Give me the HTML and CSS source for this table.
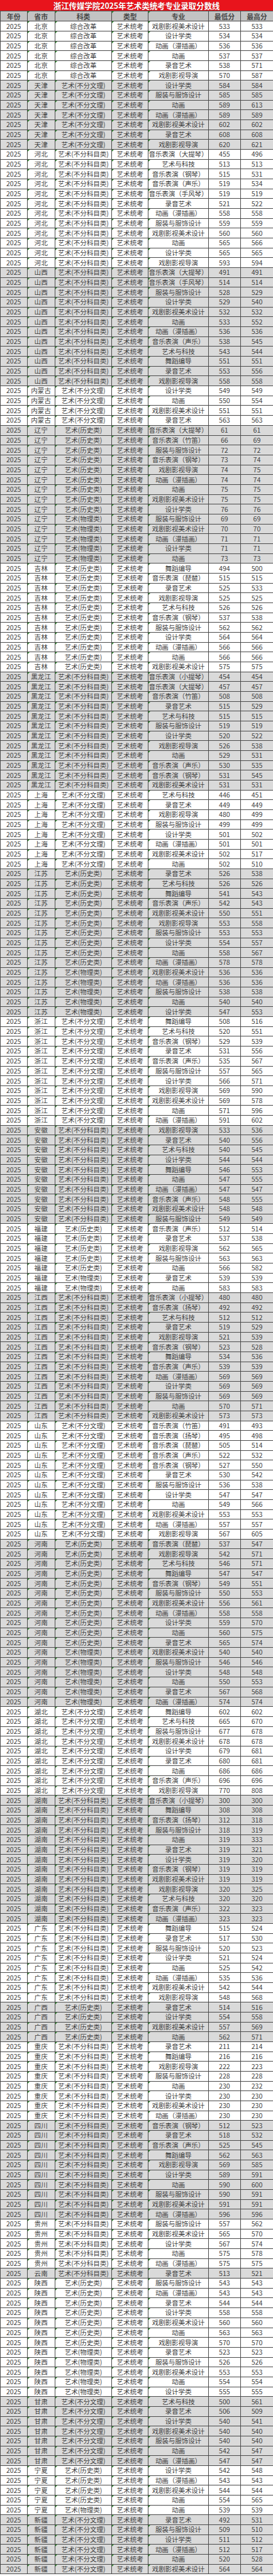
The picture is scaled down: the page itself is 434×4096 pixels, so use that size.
FILE: index.html
```html
<!DOCTYPE html>
<html lang="zh">
<head>
<meta charset="utf-8">
<title>浙江传媒学院2025年艺术类统考专业录取分数线</title>
<link rel="stylesheet" href="styles.css">
</head>
<body>
<div class="sheet">
<div class="title">浙江传媒学院2025年艺术类统考专业录取分数线</div>
<table class="grid">
<colgroup><col class="c1"><col class="c2"><col class="c3"><col class="c4"><col class="c5"><col class="c6"><col class="c7"></colgroup>
<thead><tr class="head"><th>年份</th><th>省市</th><th>科类</th><th>类型</th><th>专业</th><th>最低分</th><th>最高分</th></tr></thead>
<tbody>
<tr><td>2025</td><td>北京</td><td>综合改革</td><td>艺术统考</td><td>戏剧影视美术设计</td><td>533</td><td>533</td></tr>
<tr><td>2025</td><td>北京</td><td>综合改革</td><td>艺术统考</td><td>设计学类</td><td>534</td><td>534</td></tr>
<tr><td>2025</td><td>北京</td><td>综合改革</td><td>艺术统考</td><td>动画（漫插画）</td><td>536</td><td>536</td></tr>
<tr><td>2025</td><td>北京</td><td>综合改革</td><td>艺术统考</td><td>动画</td><td>537</td><td>537</td></tr>
<tr><td>2025</td><td>北京</td><td>综合改革</td><td>艺术统考</td><td>录音艺术</td><td>538</td><td>571</td></tr>
<tr><td>2025</td><td>北京</td><td>综合改革</td><td>艺术统考</td><td>戏剧影视导演</td><td>570</td><td>587</td></tr>
<tr class="g"><td>2025</td><td>天津</td><td>艺术(不分文理)</td><td>艺术统考</td><td>设计学类</td><td>584</td><td>584</td></tr>
<tr class="g"><td>2025</td><td>天津</td><td>艺术(不分文理)</td><td>艺术统考</td><td>服装与服饰设计</td><td>585</td><td>585</td></tr>
<tr class="g"><td>2025</td><td>天津</td><td>艺术(不分文理)</td><td>艺术统考</td><td>动画</td><td>589</td><td>613</td></tr>
<tr class="g"><td>2025</td><td>天津</td><td>艺术(不分文理)</td><td>艺术统考</td><td>动画（漫插画）</td><td>589</td><td>589</td></tr>
<tr class="g"><td>2025</td><td>天津</td><td>艺术(不分文理)</td><td>艺术统考</td><td>戏剧影视美术设计</td><td>602</td><td>602</td></tr>
<tr class="g"><td>2025</td><td>天津</td><td>艺术(不分文理)</td><td>艺术统考</td><td>录音艺术</td><td>608</td><td>608</td></tr>
<tr class="g"><td>2025</td><td>天津</td><td>艺术(不分文理)</td><td>艺术统考</td><td>戏剧影视导演</td><td>620</td><td>621</td></tr>
<tr><td>2025</td><td>河北</td><td>艺术(不分科目类)</td><td>艺术统考</td><td>音乐表演（大提琴）</td><td>455</td><td>496</td></tr>
<tr><td>2025</td><td>河北</td><td>艺术(不分科目类)</td><td>艺术统考</td><td>艺术与科技</td><td>513</td><td>513</td></tr>
<tr><td>2025</td><td>河北</td><td>艺术(不分科目类)</td><td>艺术统考</td><td>音乐表演（钢琴）</td><td>515</td><td>531</td></tr>
<tr><td>2025</td><td>河北</td><td>艺术(不分科目类)</td><td>艺术统考</td><td>音乐表演（声乐）</td><td>519</td><td>534</td></tr>
<tr><td>2025</td><td>河北</td><td>艺术(不分科目类)</td><td>艺术统考</td><td>音乐表演（手风琴）</td><td>519</td><td>519</td></tr>
<tr><td>2025</td><td>河北</td><td>艺术(不分科目类)</td><td>艺术统考</td><td>录音艺术</td><td>521</td><td>522</td></tr>
<tr><td>2025</td><td>河北</td><td>艺术(不分科目类)</td><td>艺术统考</td><td>动画（漫插画）</td><td>558</td><td>558</td></tr>
<tr><td>2025</td><td>河北</td><td>艺术(不分科目类)</td><td>艺术统考</td><td>服装与服饰设计</td><td>559</td><td>559</td></tr>
<tr><td>2025</td><td>河北</td><td>艺术(不分科目类)</td><td>艺术统考</td><td>戏剧影视美术设计</td><td>560</td><td>560</td></tr>
<tr><td>2025</td><td>河北</td><td>艺术(不分科目类)</td><td>艺术统考</td><td>动画</td><td>565</td><td>566</td></tr>
<tr><td>2025</td><td>河北</td><td>艺术(不分科目类)</td><td>艺术统考</td><td>设计学类</td><td>565</td><td>565</td></tr>
<tr><td>2025</td><td>河北</td><td>艺术(不分科目类)</td><td>艺术统考</td><td>戏剧影视导演</td><td>593</td><td>594</td></tr>
<tr class="g"><td>2025</td><td>山西</td><td>艺术(不分科目类)</td><td>艺术统考</td><td>音乐表演（大提琴）</td><td>491</td><td>491</td></tr>
<tr class="g"><td>2025</td><td>山西</td><td>艺术(不分科目类)</td><td>艺术统考</td><td>音乐表演（手风琴）</td><td>514</td><td>514</td></tr>
<tr class="g"><td>2025</td><td>山西</td><td>艺术(不分科目类)</td><td>艺术统考</td><td>服装与服饰设计</td><td>528</td><td>529</td></tr>
<tr class="g"><td>2025</td><td>山西</td><td>艺术(不分科目类)</td><td>艺术统考</td><td>设计学类</td><td>529</td><td>540</td></tr>
<tr class="g"><td>2025</td><td>山西</td><td>艺术(不分科目类)</td><td>艺术统考</td><td>戏剧影视美术设计</td><td>532</td><td>532</td></tr>
<tr class="g"><td>2025</td><td>山西</td><td>艺术(不分科目类)</td><td>艺术统考</td><td>动画</td><td>533</td><td>552</td></tr>
<tr class="g"><td>2025</td><td>山西</td><td>艺术(不分科目类)</td><td>艺术统考</td><td>动画（漫插画）</td><td>536</td><td>536</td></tr>
<tr class="g"><td>2025</td><td>山西</td><td>艺术(不分科目类)</td><td>艺术统考</td><td>音乐表演（声乐）</td><td>538</td><td>545</td></tr>
<tr class="g"><td>2025</td><td>山西</td><td>艺术(不分科目类)</td><td>艺术统考</td><td>艺术与科技</td><td>543</td><td>544</td></tr>
<tr class="g"><td>2025</td><td>山西</td><td>艺术(不分科目类)</td><td>艺术统考</td><td>舞蹈编导</td><td>551</td><td>551</td></tr>
<tr class="g"><td>2025</td><td>山西</td><td>艺术(不分科目类)</td><td>艺术统考</td><td>录音艺术</td><td>553</td><td>556</td></tr>
<tr class="g"><td>2025</td><td>山西</td><td>艺术(不分科目类)</td><td>艺术统考</td><td>戏剧影视导演</td><td>558</td><td>558</td></tr>
<tr><td>2025</td><td>内蒙古</td><td>艺术(不分文理)</td><td>艺术统考</td><td>设计学类</td><td>549</td><td>549</td></tr>
<tr><td>2025</td><td>内蒙古</td><td>艺术(不分文理)</td><td>艺术统考</td><td>动画</td><td>550</td><td>554</td></tr>
<tr><td>2025</td><td>内蒙古</td><td>艺术(不分文理)</td><td>艺术统考</td><td>戏剧影视美术设计</td><td>551</td><td>551</td></tr>
<tr><td>2025</td><td>内蒙古</td><td>艺术(不分文理)</td><td>艺术统考</td><td>录音艺术</td><td>563</td><td>563</td></tr>
<tr class="g"><td>2025</td><td>辽宁</td><td>艺术(历史类)</td><td>艺术统考</td><td>音乐表演（大提琴）</td><td>61</td><td>61</td></tr>
<tr class="g"><td>2025</td><td>辽宁</td><td>艺术(历史类)</td><td>艺术统考</td><td>音乐表演（竹笛）</td><td>66</td><td>69</td></tr>
<tr class="g"><td>2025</td><td>辽宁</td><td>艺术(历史类)</td><td>艺术统考</td><td>服装与服饰设计</td><td>72</td><td>72</td></tr>
<tr class="g"><td>2025</td><td>辽宁</td><td>艺术(历史类)</td><td>艺术统考</td><td>音乐表演（钢琴）</td><td>73</td><td>74</td></tr>
<tr class="g"><td>2025</td><td>辽宁</td><td>艺术(历史类)</td><td>艺术统考</td><td>戏剧影视导演</td><td>74</td><td>75</td></tr>
<tr class="g"><td>2025</td><td>辽宁</td><td>艺术(历史类)</td><td>艺术统考</td><td>动画（漫插画）</td><td>74</td><td>74</td></tr>
<tr class="g"><td>2025</td><td>辽宁</td><td>艺术(历史类)</td><td>艺术统考</td><td>动画</td><td>75</td><td>75</td></tr>
<tr class="g"><td>2025</td><td>辽宁</td><td>艺术(历史类)</td><td>艺术统考</td><td>戏剧影视美术设计</td><td>75</td><td>75</td></tr>
<tr class="g"><td>2025</td><td>辽宁</td><td>艺术(历史类)</td><td>艺术统考</td><td>设计学类</td><td>76</td><td>76</td></tr>
<tr class="g"><td>2025</td><td>辽宁</td><td>艺术(物理类)</td><td>艺术统考</td><td>服装与服饰设计</td><td>69</td><td>69</td></tr>
<tr class="g"><td>2025</td><td>辽宁</td><td>艺术(物理类)</td><td>艺术统考</td><td>戏剧影视美术设计</td><td>70</td><td>70</td></tr>
<tr class="g"><td>2025</td><td>辽宁</td><td>艺术(物理类)</td><td>艺术统考</td><td>动画（漫插画）</td><td>71</td><td>71</td></tr>
<tr class="g"><td>2025</td><td>辽宁</td><td>艺术(物理类)</td><td>艺术统考</td><td>设计学类</td><td>71</td><td>71</td></tr>
<tr class="g"><td>2025</td><td>辽宁</td><td>艺术(物理类)</td><td>艺术统考</td><td>动画</td><td>73</td><td>73</td></tr>
<tr><td>2025</td><td>吉林</td><td>艺术(历史类)</td><td>艺术统考</td><td>舞蹈编导</td><td>494</td><td>500</td></tr>
<tr><td>2025</td><td>吉林</td><td>艺术(历史类)</td><td>艺术统考</td><td>音乐表演（琵琶）</td><td>515</td><td>515</td></tr>
<tr><td>2025</td><td>吉林</td><td>艺术(历史类)</td><td>艺术统考</td><td>录音艺术</td><td>525</td><td>533</td></tr>
<tr><td>2025</td><td>吉林</td><td>艺术(历史类)</td><td>艺术统考</td><td>戏剧影视导演</td><td>525</td><td>525</td></tr>
<tr><td>2025</td><td>吉林</td><td>艺术(历史类)</td><td>艺术统考</td><td>艺术与科技</td><td>526</td><td>526</td></tr>
<tr><td>2025</td><td>吉林</td><td>艺术(历史类)</td><td>艺术统考</td><td>音乐表演（钢琴）</td><td>537</td><td>538</td></tr>
<tr><td>2025</td><td>吉林</td><td>艺术(历史类)</td><td>艺术统考</td><td>服装与服饰设计</td><td>562</td><td>562</td></tr>
<tr><td>2025</td><td>吉林</td><td>艺术(历史类)</td><td>艺术统考</td><td>设计学类</td><td>564</td><td>564</td></tr>
<tr><td>2025</td><td>吉林</td><td>艺术(历史类)</td><td>艺术统考</td><td>动画（漫插画）</td><td>566</td><td>566</td></tr>
<tr><td>2025</td><td>吉林</td><td>艺术(历史类)</td><td>艺术统考</td><td>动画</td><td>566</td><td>566</td></tr>
<tr><td>2025</td><td>吉林</td><td>艺术(历史类)</td><td>艺术统考</td><td>戏剧影视美术设计</td><td>575</td><td>575</td></tr>
<tr class="g"><td>2025</td><td>黑龙江</td><td>艺术(不分科目类)</td><td>艺术统考</td><td>音乐表演（小提琴）</td><td>454</td><td>454</td></tr>
<tr class="g"><td>2025</td><td>黑龙江</td><td>艺术(不分科目类)</td><td>艺术统考</td><td>音乐表演（大提琴）</td><td>457</td><td>457</td></tr>
<tr class="g"><td>2025</td><td>黑龙江</td><td>艺术(不分科目类)</td><td>艺术统考</td><td>音乐表演（竹笛）</td><td>508</td><td>508</td></tr>
<tr class="g"><td>2025</td><td>黑龙江</td><td>艺术(不分科目类)</td><td>艺术统考</td><td>录音艺术</td><td>515</td><td>529</td></tr>
<tr class="g"><td>2025</td><td>黑龙江</td><td>艺术(不分科目类)</td><td>艺术统考</td><td>艺术与科技</td><td>515</td><td>515</td></tr>
<tr class="g"><td>2025</td><td>黑龙江</td><td>艺术(不分科目类)</td><td>艺术统考</td><td>服装与服饰设计</td><td>519</td><td>519</td></tr>
<tr class="g"><td>2025</td><td>黑龙江</td><td>艺术(不分科目类)</td><td>艺术统考</td><td>设计学类</td><td>520</td><td>522</td></tr>
<tr class="g"><td>2025</td><td>黑龙江</td><td>艺术(不分科目类)</td><td>艺术统考</td><td>戏剧影视导演</td><td>526</td><td>538</td></tr>
<tr class="g"><td>2025</td><td>黑龙江</td><td>艺术(不分科目类)</td><td>艺术统考</td><td>动画</td><td>529</td><td>531</td></tr>
<tr class="g"><td>2025</td><td>黑龙江</td><td>艺术(不分科目类)</td><td>艺术统考</td><td>音乐表演（声乐）</td><td>530</td><td>535</td></tr>
<tr class="g"><td>2025</td><td>黑龙江</td><td>艺术(不分科目类)</td><td>艺术统考</td><td>音乐表演（钢琴）</td><td>531</td><td>545</td></tr>
<tr class="g"><td>2025</td><td>黑龙江</td><td>艺术(不分科目类)</td><td>艺术统考</td><td>戏剧影视美术设计</td><td>531</td><td>531</td></tr>
<tr><td>2025</td><td>上海</td><td>艺术(不分文理)</td><td>艺术统考</td><td>艺术与科技</td><td>446</td><td>451</td></tr>
<tr><td>2025</td><td>上海</td><td>艺术(不分文理)</td><td>艺术统考</td><td>录音艺术</td><td>449</td><td>449</td></tr>
<tr><td>2025</td><td>上海</td><td>艺术(不分文理)</td><td>艺术统考</td><td>戏剧影视导演</td><td>480</td><td>499</td></tr>
<tr><td>2025</td><td>上海</td><td>艺术(不分文理)</td><td>艺术统考</td><td>服装与服饰设计</td><td>499</td><td>499</td></tr>
<tr><td>2025</td><td>上海</td><td>艺术(不分文理)</td><td>艺术统考</td><td>设计学类</td><td>501</td><td>502</td></tr>
<tr><td>2025</td><td>上海</td><td>艺术(不分文理)</td><td>艺术统考</td><td>动画（漫插画）</td><td>501</td><td>501</td></tr>
<tr><td>2025</td><td>上海</td><td>艺术(不分文理)</td><td>艺术统考</td><td>戏剧影视美术设计</td><td>502</td><td>517</td></tr>
<tr><td>2025</td><td>上海</td><td>艺术(不分文理)</td><td>艺术统考</td><td>动画</td><td>502</td><td>510</td></tr>
<tr class="g"><td>2025</td><td>江苏</td><td>艺术(历史类)</td><td>艺术统考</td><td>录音艺术</td><td>526</td><td>538</td></tr>
<tr class="g"><td>2025</td><td>江苏</td><td>艺术(历史类)</td><td>艺术统考</td><td>艺术与科技</td><td>526</td><td>526</td></tr>
<tr class="g"><td>2025</td><td>江苏</td><td>艺术(历史类)</td><td>艺术统考</td><td>舞蹈编导</td><td>541</td><td>543</td></tr>
<tr class="g"><td>2025</td><td>江苏</td><td>艺术(历史类)</td><td>艺术统考</td><td>音乐表演（声乐）</td><td>542</td><td>543</td></tr>
<tr class="g"><td>2025</td><td>江苏</td><td>艺术(历史类)</td><td>艺术统考</td><td>戏剧影视美术设计</td><td>550</td><td>551</td></tr>
<tr class="g"><td>2025</td><td>江苏</td><td>艺术(历史类)</td><td>艺术统考</td><td>戏剧影视导演</td><td>553</td><td>558</td></tr>
<tr class="g"><td>2025</td><td>江苏</td><td>艺术(历史类)</td><td>艺术统考</td><td>服装与服饰设计</td><td>553</td><td>553</td></tr>
<tr class="g"><td>2025</td><td>江苏</td><td>艺术(历史类)</td><td>艺术统考</td><td>设计学类</td><td>554</td><td>557</td></tr>
<tr class="g"><td>2025</td><td>江苏</td><td>艺术(历史类)</td><td>艺术统考</td><td>动画</td><td>558</td><td>567</td></tr>
<tr class="g"><td>2025</td><td>江苏</td><td>艺术(历史类)</td><td>艺术统考</td><td>动画（漫插画）</td><td>578</td><td>578</td></tr>
<tr class="g"><td>2025</td><td>江苏</td><td>艺术(物理类)</td><td>艺术统考</td><td>戏剧影视美术设计</td><td>536</td><td>536</td></tr>
<tr class="g"><td>2025</td><td>江苏</td><td>艺术(物理类)</td><td>艺术统考</td><td>动画（漫插画）</td><td>536</td><td>536</td></tr>
<tr class="g"><td>2025</td><td>江苏</td><td>艺术(物理类)</td><td>艺术统考</td><td>服装与服饰设计</td><td>538</td><td>538</td></tr>
<tr class="g"><td>2025</td><td>江苏</td><td>艺术(物理类)</td><td>艺术统考</td><td>动画</td><td>540</td><td>540</td></tr>
<tr class="g"><td>2025</td><td>江苏</td><td>艺术(物理类)</td><td>艺术统考</td><td>设计学类</td><td>547</td><td>553</td></tr>
<tr><td>2025</td><td>浙江</td><td>艺术(不分文理)</td><td>艺术统考</td><td>舞蹈编导</td><td>508</td><td>516</td></tr>
<tr><td>2025</td><td>浙江</td><td>艺术(不分文理)</td><td>艺术统考</td><td>艺术与科技</td><td>520</td><td>551</td></tr>
<tr><td>2025</td><td>浙江</td><td>艺术(不分文理)</td><td>艺术统考</td><td>音乐表演（钢琴）</td><td>529</td><td>539</td></tr>
<tr><td>2025</td><td>浙江</td><td>艺术(不分文理)</td><td>艺术统考</td><td>录音艺术</td><td>531</td><td>556</td></tr>
<tr><td>2025</td><td>浙江</td><td>艺术(不分文理)</td><td>艺术统考</td><td>音乐表演（声乐）</td><td>535</td><td>567</td></tr>
<tr><td>2025</td><td>浙江</td><td>艺术(不分文理)</td><td>艺术统考</td><td>服装与服饰设计</td><td>557</td><td>565</td></tr>
<tr><td>2025</td><td>浙江</td><td>艺术(不分文理)</td><td>艺术统考</td><td>设计学类</td><td>566</td><td>571</td></tr>
<tr><td>2025</td><td>浙江</td><td>艺术(不分文理)</td><td>艺术统考</td><td>戏剧影视导演</td><td>569</td><td>590</td></tr>
<tr><td>2025</td><td>浙江</td><td>艺术(不分文理)</td><td>艺术统考</td><td>戏剧影视美术设计</td><td>569</td><td>578</td></tr>
<tr><td>2025</td><td>浙江</td><td>艺术(不分文理)</td><td>艺术统考</td><td>动画</td><td>571</td><td>596</td></tr>
<tr><td>2025</td><td>浙江</td><td>艺术(不分文理)</td><td>艺术统考</td><td>动画（漫插画）</td><td>591</td><td>602</td></tr>
<tr class="g"><td>2025</td><td>安徽</td><td>艺术(不分科目类)</td><td>艺术统考</td><td>戏剧影视导演</td><td>533</td><td>536</td></tr>
<tr class="g"><td>2025</td><td>安徽</td><td>艺术(不分科目类)</td><td>艺术统考</td><td>录音艺术</td><td>540</td><td>556</td></tr>
<tr class="g"><td>2025</td><td>安徽</td><td>艺术(不分科目类)</td><td>艺术统考</td><td>艺术与科技</td><td>540</td><td>545</td></tr>
<tr class="g"><td>2025</td><td>安徽</td><td>艺术(不分科目类)</td><td>艺术统考</td><td>设计学类</td><td>544</td><td>544</td></tr>
<tr class="g"><td>2025</td><td>安徽</td><td>艺术(不分科目类)</td><td>艺术统考</td><td>舞蹈编导</td><td>546</td><td>553</td></tr>
<tr class="g"><td>2025</td><td>安徽</td><td>艺术(不分科目类)</td><td>艺术统考</td><td>动画</td><td>547</td><td>555</td></tr>
<tr class="g"><td>2025</td><td>安徽</td><td>艺术(不分科目类)</td><td>艺术统考</td><td>动画（漫插画）</td><td>547</td><td>547</td></tr>
<tr class="g"><td>2025</td><td>安徽</td><td>艺术(不分科目类)</td><td>艺术统考</td><td>音乐表演（声乐）</td><td>548</td><td>555</td></tr>
<tr class="g"><td>2025</td><td>安徽</td><td>艺术(不分科目类)</td><td>艺术统考</td><td>戏剧影视美术设计</td><td>548</td><td>548</td></tr>
<tr class="g"><td>2025</td><td>安徽</td><td>艺术(不分科目类)</td><td>艺术统考</td><td>服装与服饰设计</td><td>549</td><td>549</td></tr>
<tr><td>2025</td><td>福建</td><td>艺术(历史类)</td><td>艺术统考</td><td>音乐表演（声乐）</td><td>512</td><td>514</td></tr>
<tr><td>2025</td><td>福建</td><td>艺术(历史类)</td><td>艺术统考</td><td>录音艺术</td><td>537</td><td>538</td></tr>
<tr><td>2025</td><td>福建</td><td>艺术(历史类)</td><td>艺术统考</td><td>戏剧影视导演</td><td>562</td><td>565</td></tr>
<tr><td>2025</td><td>福建</td><td>艺术(历史类)</td><td>艺术统考</td><td>服装与服饰设计</td><td>563</td><td>563</td></tr>
<tr><td>2025</td><td>福建</td><td>艺术(历史类)</td><td>艺术统考</td><td>动画</td><td>566</td><td>582</td></tr>
<tr><td>2025</td><td>福建</td><td>艺术(物理类)</td><td>艺术统考</td><td>录音艺术</td><td>539</td><td>539</td></tr>
<tr><td>2025</td><td>福建</td><td>艺术(物理类)</td><td>艺术统考</td><td>动画</td><td>583</td><td>583</td></tr>
<tr class="g"><td>2025</td><td>江西</td><td>艺术(不分科目类)</td><td>艺术统考</td><td>音乐表演（小提琴）</td><td>480</td><td>480</td></tr>
<tr class="g"><td>2025</td><td>江西</td><td>艺术(不分科目类)</td><td>艺术统考</td><td>音乐表演（扬琴）</td><td>492</td><td>492</td></tr>
<tr class="g"><td>2025</td><td>江西</td><td>艺术(不分科目类)</td><td>艺术统考</td><td>艺术与科技</td><td>512</td><td>512</td></tr>
<tr class="g"><td>2025</td><td>江西</td><td>艺术(不分科目类)</td><td>艺术统考</td><td>录音艺术</td><td>519</td><td>529</td></tr>
<tr class="g"><td>2025</td><td>江西</td><td>艺术(不分科目类)</td><td>艺术统考</td><td>戏剧影视导演</td><td>521</td><td>539</td></tr>
<tr class="g"><td>2025</td><td>江西</td><td>艺术(不分科目类)</td><td>艺术统考</td><td>音乐表演（钢琴）</td><td>523</td><td>528</td></tr>
<tr class="g"><td>2025</td><td>江西</td><td>艺术(不分科目类)</td><td>艺术统考</td><td>舞蹈编导</td><td>534</td><td>536</td></tr>
<tr class="g"><td>2025</td><td>江西</td><td>艺术(不分科目类)</td><td>艺术统考</td><td>音乐表演（声乐）</td><td>539</td><td>539</td></tr>
<tr class="g"><td>2025</td><td>江西</td><td>艺术(不分科目类)</td><td>艺术统考</td><td>动画（漫插画）</td><td>569</td><td>569</td></tr>
<tr class="g"><td>2025</td><td>江西</td><td>艺术(不分科目类)</td><td>艺术统考</td><td>设计学类</td><td>569</td><td>569</td></tr>
<tr class="g"><td>2025</td><td>江西</td><td>艺术(不分科目类)</td><td>艺术统考</td><td>服装与服饰设计</td><td>569</td><td>569</td></tr>
<tr class="g"><td>2025</td><td>江西</td><td>艺术(不分科目类)</td><td>艺术统考</td><td>动画</td><td>570</td><td>571</td></tr>
<tr class="g"><td>2025</td><td>江西</td><td>艺术(不分科目类)</td><td>艺术统考</td><td>戏剧影视美术设计</td><td>573</td><td>573</td></tr>
<tr><td>2025</td><td>山东</td><td>艺术(不分文理)</td><td>艺术统考</td><td>音乐表演（竹笛）</td><td>491</td><td>493</td></tr>
<tr><td>2025</td><td>山东</td><td>艺术(不分文理)</td><td>艺术统考</td><td>音乐表演（扬琴）</td><td>495</td><td>498</td></tr>
<tr><td>2025</td><td>山东</td><td>艺术(不分文理)</td><td>艺术统考</td><td>音乐表演（琵琶）</td><td>505</td><td>514</td></tr>
<tr><td>2025</td><td>山东</td><td>艺术(不分文理)</td><td>艺术统考</td><td>音乐表演（声乐）</td><td>522</td><td>532</td></tr>
<tr><td>2025</td><td>山东</td><td>艺术(不分文理)</td><td>艺术统考</td><td>音乐表演（钢琴）</td><td>527</td><td>550</td></tr>
<tr><td>2025</td><td>山东</td><td>艺术(不分文理)</td><td>艺术统考</td><td>录音艺术</td><td>530</td><td>542</td></tr>
<tr><td>2025</td><td>山东</td><td>艺术(不分文理)</td><td>艺术统考</td><td>服装与服饰设计</td><td>536</td><td>538</td></tr>
<tr><td>2025</td><td>山东</td><td>艺术(不分文理)</td><td>艺术统考</td><td>设计学类</td><td>547</td><td>547</td></tr>
<tr><td>2025</td><td>山东</td><td>艺术(不分文理)</td><td>艺术统考</td><td>动画</td><td>549</td><td>566</td></tr>
<tr><td>2025</td><td>山东</td><td>艺术(不分文理)</td><td>艺术统考</td><td>戏剧影视美术设计</td><td>553</td><td>553</td></tr>
<tr><td>2025</td><td>山东</td><td>艺术(不分文理)</td><td>艺术统考</td><td>动画（漫插画）</td><td>557</td><td>557</td></tr>
<tr><td>2025</td><td>山东</td><td>艺术(不分文理)</td><td>艺术统考</td><td>戏剧影视导演</td><td>567</td><td>605</td></tr>
<tr class="g"><td>2025</td><td>河南</td><td>艺术(历史类)</td><td>艺术统考</td><td>音乐表演（琵琶）</td><td>537</td><td>547</td></tr>
<tr class="g"><td>2025</td><td>河南</td><td>艺术(历史类)</td><td>艺术统考</td><td>戏剧影视导演</td><td>542</td><td>571</td></tr>
<tr class="g"><td>2025</td><td>河南</td><td>艺术(历史类)</td><td>艺术统考</td><td>艺术与科技</td><td>546</td><td>571</td></tr>
<tr class="g"><td>2025</td><td>河南</td><td>艺术(历史类)</td><td>艺术统考</td><td>舞蹈编导</td><td>547</td><td>547</td></tr>
<tr class="g"><td>2025</td><td>河南</td><td>艺术(历史类)</td><td>艺术统考</td><td>音乐表演（钢琴）</td><td>549</td><td>551</td></tr>
<tr class="g"><td>2025</td><td>河南</td><td>艺术(历史类)</td><td>艺术统考</td><td>服装与服饰设计</td><td>550</td><td>553</td></tr>
<tr class="g"><td>2025</td><td>河南</td><td>艺术(历史类)</td><td>艺术统考</td><td>戏剧影视美术设计</td><td>556</td><td>561</td></tr>
<tr class="g"><td>2025</td><td>河南</td><td>艺术(历史类)</td><td>艺术统考</td><td>动画（漫插画）</td><td>558</td><td>558</td></tr>
<tr class="g"><td>2025</td><td>河南</td><td>艺术(历史类)</td><td>艺术统考</td><td>设计学类</td><td>559</td><td>570</td></tr>
<tr class="g"><td>2025</td><td>河南</td><td>艺术(历史类)</td><td>艺术统考</td><td>动画</td><td>560</td><td>575</td></tr>
<tr class="g"><td>2025</td><td>河南</td><td>艺术(历史类)</td><td>艺术统考</td><td>录音艺术</td><td>565</td><td>574</td></tr>
<tr class="g"><td>2025</td><td>河南</td><td>艺术(物理类)</td><td>艺术统考</td><td>戏剧影视美术设计</td><td>540</td><td>540</td></tr>
<tr class="g"><td>2025</td><td>河南</td><td>艺术(物理类)</td><td>艺术统考</td><td>服装与服饰设计</td><td>546</td><td>546</td></tr>
<tr class="g"><td>2025</td><td>河南</td><td>艺术(物理类)</td><td>艺术统考</td><td>设计学类</td><td>548</td><td>548</td></tr>
<tr class="g"><td>2025</td><td>河南</td><td>艺术(物理类)</td><td>艺术统考</td><td>动画</td><td>550</td><td>553</td></tr>
<tr class="g"><td>2025</td><td>河南</td><td>艺术(物理类)</td><td>艺术统考</td><td>录音艺术</td><td>567</td><td>568</td></tr>
<tr class="g"><td>2025</td><td>河南</td><td>艺术(物理类)</td><td>艺术统考</td><td>动画（漫插画）</td><td>574</td><td>574</td></tr>
<tr><td>2025</td><td>湖北</td><td>艺术(不分文理)</td><td>艺术统考</td><td>舞蹈编导</td><td>602</td><td>602</td></tr>
<tr><td>2025</td><td>湖北</td><td>艺术(不分文理)</td><td>艺术统考</td><td>艺术与科技</td><td>665</td><td>670</td></tr>
<tr><td>2025</td><td>湖北</td><td>艺术(不分文理)</td><td>艺术统考</td><td>服装与服饰设计</td><td>677</td><td>678</td></tr>
<tr><td>2025</td><td>湖北</td><td>艺术(不分文理)</td><td>艺术统考</td><td>戏剧影视美术设计</td><td>678</td><td>678</td></tr>
<tr><td>2025</td><td>湖北</td><td>艺术(不分文理)</td><td>艺术统考</td><td>设计学类</td><td>679</td><td>681</td></tr>
<tr><td>2025</td><td>湖北</td><td>艺术(不分文理)</td><td>艺术统考</td><td>录音艺术</td><td>680</td><td>681</td></tr>
<tr><td>2025</td><td>湖北</td><td>艺术(不分文理)</td><td>艺术统考</td><td>动画</td><td>686</td><td>686</td></tr>
<tr><td>2025</td><td>湖北</td><td>艺术(不分文理)</td><td>艺术统考</td><td>音乐表演（声乐）</td><td>696</td><td>696</td></tr>
<tr><td>2025</td><td>湖北</td><td>艺术(不分文理)</td><td>艺术统考</td><td>戏剧影视导演</td><td>770</td><td>808</td></tr>
<tr class="g"><td>2025</td><td>湖南</td><td>艺术(不分科目类)</td><td>艺术统考</td><td>音乐表演（小提琴）</td><td>300</td><td>300</td></tr>
<tr class="g"><td>2025</td><td>湖南</td><td>艺术(不分科目类)</td><td>艺术统考</td><td>舞蹈编导</td><td>308</td><td>308</td></tr>
<tr class="g"><td>2025</td><td>湖南</td><td>艺术(不分科目类)</td><td>艺术统考</td><td>音乐表演（扬琴）</td><td>312</td><td>318</td></tr>
<tr class="g"><td>2025</td><td>湖南</td><td>艺术(不分科目类)</td><td>艺术统考</td><td>服装与服饰设计</td><td>318</td><td>319</td></tr>
<tr class="g"><td>2025</td><td>湖南</td><td>艺术(不分科目类)</td><td>艺术统考</td><td>动画</td><td>319</td><td>333</td></tr>
<tr class="g"><td>2025</td><td>湖南</td><td>艺术(不分科目类)</td><td>艺术统考</td><td>录音艺术</td><td>319</td><td>321</td></tr>
<tr class="g"><td>2025</td><td>湖南</td><td>艺术(不分科目类)</td><td>艺术统考</td><td>设计学类</td><td>319</td><td>320</td></tr>
<tr class="g"><td>2025</td><td>湖南</td><td>艺术(不分科目类)</td><td>艺术统考</td><td>音乐表演（钢琴）</td><td>319</td><td>319</td></tr>
<tr class="g"><td>2025</td><td>湖南</td><td>艺术(不分科目类)</td><td>艺术统考</td><td>戏剧影视美术设计</td><td>319</td><td>319</td></tr>
<tr class="g"><td>2025</td><td>湖南</td><td>艺术(不分科目类)</td><td>艺术统考</td><td>戏剧影视导演</td><td>320</td><td>325</td></tr>
<tr class="g"><td>2025</td><td>湖南</td><td>艺术(不分科目类)</td><td>艺术统考</td><td>艺术与科技</td><td>320</td><td>320</td></tr>
<tr class="g"><td>2025</td><td>湖南</td><td>艺术(不分科目类)</td><td>艺术统考</td><td>音乐表演（声乐）</td><td>322</td><td>323</td></tr>
<tr class="g"><td>2025</td><td>湖南</td><td>艺术(不分科目类)</td><td>艺术统考</td><td>动画（漫插画）</td><td>323</td><td>323</td></tr>
<tr><td>2025</td><td>广东</td><td>艺术(不分科目类)</td><td>艺术统考</td><td>舞蹈编导</td><td>515</td><td>524</td></tr>
<tr><td>2025</td><td>广东</td><td>艺术(不分科目类)</td><td>艺术统考</td><td>录音艺术</td><td>517</td><td>530</td></tr>
<tr><td>2025</td><td>广东</td><td>艺术(不分科目类)</td><td>艺术统考</td><td>服装与服饰设计</td><td>520</td><td>523</td></tr>
<tr><td>2025</td><td>广东</td><td>艺术(不分科目类)</td><td>艺术统考</td><td>设计学类</td><td>521</td><td>524</td></tr>
<tr><td>2025</td><td>广东</td><td>艺术(不分科目类)</td><td>艺术统考</td><td>动画</td><td>525</td><td>542</td></tr>
<tr><td>2025</td><td>广东</td><td>艺术(不分科目类)</td><td>艺术统考</td><td>动画（漫插画）</td><td>535</td><td>536</td></tr>
<tr><td>2025</td><td>广东</td><td>艺术(不分科目类)</td><td>艺术统考</td><td>戏剧影视美术设计</td><td>542</td><td>544</td></tr>
<tr><td>2025</td><td>广东</td><td>艺术(不分科目类)</td><td>艺术统考</td><td>戏剧影视导演</td><td>548</td><td>568</td></tr>
<tr class="g"><td>2025</td><td>广西</td><td>艺术(历史类)</td><td>艺术统考</td><td>录音艺术</td><td>514</td><td>516</td></tr>
<tr class="g"><td>2025</td><td>广西</td><td>艺术(历史类)</td><td>艺术统考</td><td>设计学类</td><td>554</td><td>558</td></tr>
<tr class="g"><td>2025</td><td>广西</td><td>艺术(历史类)</td><td>艺术统考</td><td>戏剧影视美术设计</td><td>557</td><td>569</td></tr>
<tr class="g"><td>2025</td><td>广西</td><td>艺术(历史类)</td><td>艺术统考</td><td>动画</td><td>562</td><td>571</td></tr>
<tr><td>2025</td><td>重庆</td><td>艺术(不分科目类)</td><td>艺术统考</td><td>录音艺术</td><td>211</td><td>214</td></tr>
<tr><td>2025</td><td>重庆</td><td>艺术(不分科目类)</td><td>艺术统考</td><td>舞蹈编导</td><td>216</td><td>216</td></tr>
<tr><td>2025</td><td>重庆</td><td>艺术(不分科目类)</td><td>艺术统考</td><td>戏剧影视导演</td><td>222</td><td>223</td></tr>
<tr><td>2025</td><td>重庆</td><td>艺术(不分科目类)</td><td>艺术统考</td><td>服装与服饰设计</td><td>228</td><td>228</td></tr>
<tr><td>2025</td><td>重庆</td><td>艺术(不分科目类)</td><td>艺术统考</td><td>动画</td><td>230</td><td>232</td></tr>
<tr><td>2025</td><td>重庆</td><td>艺术(不分科目类)</td><td>艺术统考</td><td>设计学类</td><td>230</td><td>230</td></tr>
<tr><td>2025</td><td>重庆</td><td>艺术(不分科目类)</td><td>艺术统考</td><td>戏剧影视美术设计</td><td>230</td><td>230</td></tr>
<tr><td>2025</td><td>重庆</td><td>艺术(不分科目类)</td><td>艺术统考</td><td>动画（漫插画）</td><td>230</td><td>230</td></tr>
<tr class="g"><td>2025</td><td>四川</td><td>艺术(不分科目类)</td><td>艺术统考</td><td>音乐表演（钢琴）</td><td>512</td><td>523</td></tr>
<tr class="g"><td>2025</td><td>四川</td><td>艺术(不分科目类)</td><td>艺术统考</td><td>录音艺术</td><td>518</td><td>532</td></tr>
<tr class="g"><td>2025</td><td>四川</td><td>艺术(不分科目类)</td><td>艺术统考</td><td>音乐表演（声乐）</td><td>525</td><td>545</td></tr>
<tr class="g"><td>2025</td><td>四川</td><td>艺术(不分科目类)</td><td>艺术统考</td><td>舞蹈编导</td><td>562</td><td>563</td></tr>
<tr class="g"><td>2025</td><td>四川</td><td>艺术(不分科目类)</td><td>艺术统考</td><td>戏剧影视导演</td><td>569</td><td>585</td></tr>
<tr class="g"><td>2025</td><td>四川</td><td>艺术(不分科目类)</td><td>艺术统考</td><td>设计学类</td><td>589</td><td>591</td></tr>
<tr class="g"><td>2025</td><td>四川</td><td>艺术(不分科目类)</td><td>艺术统考</td><td>动画</td><td>590</td><td>600</td></tr>
<tr class="g"><td>2025</td><td>四川</td><td>艺术(不分科目类)</td><td>艺术统考</td><td>服装与服饰设计</td><td>590</td><td>591</td></tr>
<tr class="g"><td>2025</td><td>四川</td><td>艺术(不分科目类)</td><td>艺术统考</td><td>戏剧影视美术设计</td><td>591</td><td>591</td></tr>
<tr class="g"><td>2025</td><td>四川</td><td>艺术(不分科目类)</td><td>艺术统考</td><td>动画（漫插画）</td><td>596</td><td>596</td></tr>
<tr><td>2025</td><td>贵州</td><td>艺术(不分科目类)</td><td>艺术统考</td><td>服装与服饰设计</td><td>557</td><td>562</td></tr>
<tr><td>2025</td><td>贵州</td><td>艺术(不分科目类)</td><td>艺术统考</td><td>戏剧影视美术设计</td><td>565</td><td>570</td></tr>
<tr><td>2025</td><td>贵州</td><td>艺术(不分科目类)</td><td>艺术统考</td><td>设计学类</td><td>567</td><td>574</td></tr>
<tr><td>2025</td><td>贵州</td><td>艺术(不分科目类)</td><td>艺术统考</td><td>动画</td><td>575</td><td>578</td></tr>
<tr><td>2025</td><td>贵州</td><td>艺术(不分科目类)</td><td>艺术统考</td><td>动画（漫插画）</td><td>575</td><td>575</td></tr>
<tr class="g"><td>2025</td><td>云南</td><td>艺术(不分科目类)</td><td>艺术统考</td><td>录音艺术</td><td>513</td><td>521</td></tr>
<tr><td>2025</td><td>陕西</td><td>艺术(历史类)</td><td>艺术统考</td><td>服装与服饰设计</td><td>543</td><td>543</td></tr>
<tr><td>2025</td><td>陕西</td><td>艺术(历史类)</td><td>艺术统考</td><td>动画（漫插画）</td><td>543</td><td>543</td></tr>
<tr><td>2025</td><td>陕西</td><td>艺术(历史类)</td><td>艺术统考</td><td>录音艺术</td><td>544</td><td>544</td></tr>
<tr><td>2025</td><td>陕西</td><td>艺术(历史类)</td><td>艺术统考</td><td>设计学类</td><td>558</td><td>558</td></tr>
<tr><td>2025</td><td>陕西</td><td>艺术(历史类)</td><td>艺术统考</td><td>戏剧影视美术设计</td><td>560</td><td>560</td></tr>
<tr><td>2025</td><td>陕西</td><td>艺术(历史类)</td><td>艺术统考</td><td>动画</td><td>563</td><td>563</td></tr>
<tr><td>2025</td><td>陕西</td><td>艺术(历史类)</td><td>艺术统考</td><td>戏剧影视导演</td><td>570</td><td>570</td></tr>
<tr><td>2025</td><td>陕西</td><td>艺术(物理类)</td><td>艺术统考</td><td>录音艺术</td><td>523</td><td>523</td></tr>
<tr><td>2025</td><td>陕西</td><td>艺术(物理类)</td><td>艺术统考</td><td>服装与服饰设计</td><td>526</td><td>526</td></tr>
<tr><td>2025</td><td>陕西</td><td>艺术(物理类)</td><td>艺术统考</td><td>戏剧影视美术设计</td><td>553</td><td>553</td></tr>
<tr><td>2025</td><td>陕西</td><td>艺术(物理类)</td><td>艺术统考</td><td>动画</td><td>554</td><td>554</td></tr>
<tr><td>2025</td><td>陕西</td><td>艺术(物理类)</td><td>艺术统考</td><td>设计学类</td><td>555</td><td>555</td></tr>
<tr class="g"><td>2025</td><td>甘肃</td><td>艺术(不分文理)</td><td>艺术统考</td><td>艺术与科技</td><td>500</td><td>561</td></tr>
<tr class="g"><td>2025</td><td>甘肃</td><td>艺术(不分文理)</td><td>艺术统考</td><td>录音艺术</td><td>506</td><td>509</td></tr>
<tr class="g"><td>2025</td><td>甘肃</td><td>艺术(不分文理)</td><td>艺术统考</td><td>设计学类</td><td>540</td><td>541</td></tr>
<tr class="g"><td>2025</td><td>甘肃</td><td>艺术(不分文理)</td><td>艺术统考</td><td>戏剧影视美术设计</td><td>540</td><td>540</td></tr>
<tr class="g"><td>2025</td><td>甘肃</td><td>艺术(不分文理)</td><td>艺术统考</td><td>服装与服饰设计</td><td>540</td><td>540</td></tr>
<tr class="g"><td>2025</td><td>甘肃</td><td>艺术(不分文理)</td><td>艺术统考</td><td>动画</td><td>542</td><td>547</td></tr>
<tr class="g"><td>2025</td><td>甘肃</td><td>艺术(不分文理)</td><td>艺术统考</td><td>动画（漫插画）</td><td>547</td><td>547</td></tr>
<tr><td>2025</td><td>宁夏</td><td>艺术(历史类)</td><td>艺术统考</td><td>设计学类</td><td>542</td><td>548</td></tr>
<tr><td>2025</td><td>宁夏</td><td>艺术(历史类)</td><td>艺术统考</td><td>动画（漫插画）</td><td>543</td><td>543</td></tr>
<tr><td>2025</td><td>宁夏</td><td>艺术(历史类)</td><td>艺术统考</td><td>戏剧影视美术设计</td><td>544</td><td>544</td></tr>
<tr><td>2025</td><td>宁夏</td><td>艺术(历史类)</td><td>艺术统考</td><td>动画</td><td>554</td><td>565</td></tr>
<tr><td>2025</td><td>宁夏</td><td>艺术(物理类)</td><td>艺术统考</td><td>动画</td><td>539</td><td>539</td></tr>
<tr class="g"><td>2025</td><td>新疆</td><td>艺术(不分文理)</td><td>艺术统考</td><td>录音艺术</td><td>492</td><td>531</td></tr>
<tr class="g"><td>2025</td><td>新疆</td><td>艺术(不分文理)</td><td>艺术统考</td><td>服装与服饰设计</td><td>509</td><td>510</td></tr>
<tr class="g"><td>2025</td><td>新疆</td><td>艺术(不分文理)</td><td>艺术统考</td><td>设计学类</td><td>511</td><td>512</td></tr>
<tr class="g"><td>2025</td><td>新疆</td><td>艺术(不分文理)</td><td>艺术统考</td><td>动画（漫插画）</td><td>512</td><td>517</td></tr>
<tr class="g"><td>2025</td><td>新疆</td><td>艺术(不分文理)</td><td>艺术统考</td><td>动画</td><td>520</td><td>528</td></tr>
<tr class="g"><td>2025</td><td>新疆</td><td>艺术(不分文理)</td><td>艺术统考</td><td>戏剧影视美术设计</td><td>564</td><td>564</td></tr>
</tbody>
</table>
</div>
</body>
</html>
```
FILE: styles.css
```css
html, body {
  margin: 0;
  padding: 0;
  background: #ffffff;
}

.sheet {
  width: 434px;
  font-family: "Noto Sans CJK SC", "Noto Sans", sans-serif;
}

.title {
  height: 17.4px;
  background: #e8141c;
  color: #ffffff;
  font-weight: 700;
  font-size: 12.6px;
  line-height: 17.4px;
  text-align: center;
  letter-spacing: -0.2px;
  text-shadow: 0 0 1px rgba(90, 0, 0, 0.5);
}

.grid {
  width: 434px;
  border-collapse: collapse;
  table-layout: fixed;
}

.c1 { width: 42.5px; }
.c2 { width: 44.3px; }
.c3 { width: 90.3px; }
.c4 { width: 58.2px; }
.c5 { width: 95.4px; }
.c6 { width: 51.3px; }
.c7 { width: 52px; }

.grid th,
.grid td {
  border: 1px solid #4a4a4a;
  padding: 0;
  text-align: center;
  vertical-align: middle;
  white-space: nowrap;
  overflow: hidden;
  font-size: 10.6px;
  line-height: 12px;
  color: #3e3e3e;
  position: relative;
}

.grid tr { height: 15.68px; }
.grid tr.head { height: 15.9px; }

.grid th {
  background: #c3c3c3;
  font-weight: 700;
  color: #474747;
  font-size: 10.8px;
}

.grid tr.g td { background: #dadada; }

.grid td:nth-child(n+2):nth-child(-n+5)::before,
.grid th:nth-child(n+2):nth-child(-n+5)::before {
  content: "";
  position: absolute;
  left: 0;
  top: 0;
  border-top: 3px solid #2f8a2f;
  border-right: 3px solid transparent;
}

.grid td:nth-child(5) { letter-spacing: -0.15px; }
.grid td:nth-child(3) { letter-spacing: -0.1px; }
```
